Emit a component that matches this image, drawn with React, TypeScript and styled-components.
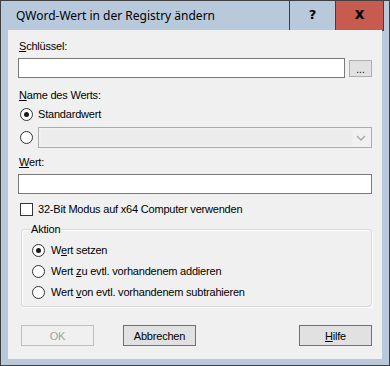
import styled, { createGlobalStyle } from "styled-components";

const Global = createGlobalStyle`
  html, body { margin: 0; padding: 0; background: #ffffff; }
  body {
    font-family: "Liberation Sans", Arial, sans-serif;
    font-size: 11px;
    letter-spacing: -0.2px;
    color: #000;
  }
  * { box-sizing: border-box; }
`;

export default function App(): JSX.Element {
  return (
    <Window>
      <Global />
      <TitleBar>
        <Title>QWord-Wert in der Registry ändern</Title>
        <CaptionButton>?</CaptionButton>
        <CaptionButton $close>x</CaptionButton>
      </TitleBar>
      <Client>
        <Label $top={10}>
          <u>S</u>chlüssel:
        </Label>
        <InputRow $top={5}>
          <TextBox />
          <DotsButton>...</DotsButton>
        </InputRow>
        <Label $top={11}>
          <u>N</u>ame des Werts:
        </Label>
        <OptionRow $top={6}>
          <Radio $checked />
          <span>Standardwert</span>
        </OptionRow>
        <OptionRow $top={6} $tall>
          <Radio />
          <Combo>
            <ComboInner />
            <ComboArrow>
              <svg width="10" height="6" viewBox="0 0 10 6">
                <path d="M1 1 L5 5 L9 1" fill="none" stroke="#a8a8a8" strokeWidth="1.4" />
              </svg>
            </ComboArrow>
          </Combo>
        </OptionRow>
        <Label $top={8}>
          <u>W</u>ert:
        </Label>
        <InputRow $top={5}>
          <TextBox />
        </InputRow>
        <OptionRow $top={9}>
          <CheckBox />
          <span>32-Bit Modus auf x64 Computer verwenden</span>
        </OptionRow>
        <Group>
          <Legend>Aktion</Legend>
          <GroupRow>
            <Radio $checked />
            <span>
              W<u>e</u>rt setzen
            </span>
          </GroupRow>
          <GroupRow>
            <Radio />
            <span>
              Wert <u>z</u>u evtl. vorhandenem addieren
            </span>
          </GroupRow>
          <GroupRow>
            <Radio />
            <span>
              Wert <u>v</u>on evtl. vorhandenem subtrahieren
            </span>
          </GroupRow>
        </Group>
        <ButtonBar>
          <PushButton disabled>OK</PushButton>
          <PushButton>Abbrechen</PushButton>
          <Spacer />
          <PushButton>
            <u>H</u>ilfe
          </PushButton>
        </ButtonBar>
      </Client>
    </Window>
  );
}

const Window = styled.div`
  width: 390px;
  height: 366px;
  border: 1px solid #3f3f3f;
  background: #b9c9dc;
  display: flex;
  flex-direction: column;
`;

const TitleBar = styled.div`
  height: 30px;
  display: flex;
  align-items: flex-start;
  padding-right: 5px;
  margin-top: -1px;
`;

const Title = styled.div`
  flex: 1;
  padding-left: 15px;
  padding-top: 1px;
  line-height: 30px;
  font-family: "Noto Sans", "Open Sans", sans-serif;
  font-size: 12px;
  letter-spacing: 0;
  color: #000;
`;

const CaptionButton = styled.div<{ $close?: boolean }>`
  width: ${(p) => (p.$close ? 48 : 47)}px;
  height: 31px;
  border: 1px solid #3f3f3f;
  border-left: ${(p) => (p.$close ? "none" : "1px solid #3f3f3f")};
  background: ${(p) => (p.$close ? "#c75b50" : "#b9c9dc")};
  display: flex;
  align-items: center;
  justify-content: center;
  font-family: "DejaVu Sans", sans-serif;
  font-weight: 900;
  font-size: ${(p) => (p.$close ? 15 : 13)}px;
  letter-spacing: 0;
  padding-bottom: ${(p) => (p.$close ? 3 : 2)}px;
`;

const Client = styled.div`
  flex: 1;
  margin: 0 7px 6px 7px;
  background: #f0f0f0;
  display: flex;
  flex-direction: column;
  padding: 0 10px 0 10px;
`;

const Label = styled.div<{ $top: number }>`
  margin-top: ${(p) => p.$top}px;
  height: 13px;
  line-height: 13px;
  padding-left: 1px;
`;

const InputRow = styled.div<{ $top: number }>`
  margin-top: ${(p) => p.$top}px;
  display: flex;
  align-items: center;
  gap: 4px;
`;

const TextBox = styled.div`
  flex: 1;
  height: 20px;
  background: #ffffff;
  border: 1px solid #7a7a7a;
`;

const DotsButton = styled.div`
  width: 23px;
  height: 17px;
  background: #e1e1e1;
  border: 1px solid #adadad;
  display: flex;
  align-items: flex-end;
  justify-content: center;
  font-size: 10px;
  line-height: 12px;
  letter-spacing: 0;
`;

const OptionRow = styled.div<{ $top: number; $tall?: boolean }>`
  margin-top: ${(p) => p.$top}px;
  height: ${(p) => (p.$tall ? 21 : 13)}px;
  display: flex;
  align-items: center;
  gap: 5px;
  padding-left: 2px;
  line-height: 13px;
`;

const Radio = styled.span<{ $checked?: boolean }>`
  flex: none;
  width: 13px;
  height: 13px;
  border-radius: 50%;
  border: 1px solid #333333;
  background: #ffffff;
  display: flex;
  align-items: center;
  justify-content: center;
  &::after {
    content: "";
    width: 5px;
    height: 5px;
    border-radius: 50%;
    background: ${(p) => (p.$checked ? "#1a1a1a" : "transparent")};
  }
`;

const CheckBox = styled.span`
  flex: none;
  width: 13px;
  height: 13px;
  border: 1px solid #333333;
  background: #ffffff;
`;

const Combo = styled.div`
  flex: 1;
  height: 21px;
  border: 1px solid #adadad;
  background: #f0f0f0;
  display: flex;
  align-items: stretch;
  padding: 2px;
`;

const ComboInner = styled.div`
  flex: 1;
  background: #ececec;
`;

const ComboArrow = styled.div`
  width: 17px;
  display: flex;
  align-items: center;
  justify-content: center;
`;

const Group = styled.fieldset`
  margin: 7px 0 0 3px;
  padding: 8px 0 0 10px;
  border: 1px solid #d8d8d8;
  border-radius: 3px;
  box-shadow: inset 1px 1px 0 #ffffff, 1px 1px 0 #ffffff;
  height: 84px;
  display: flex;
  flex-direction: column;
`;

const Legend = styled.legend`
  margin-left: -2px;
  padding: 0 1px;
  line-height: 13px;
`;

const GroupRow = styled.div`
  height: 13px;
  display: flex;
  align-items: center;
  gap: 6px;
  line-height: 13px;
  margin-bottom: 8px;
`;

const ButtonBar = styled.div`
  margin-top: 18px;
  display: flex;
  gap: 29px;
  padding-left: 3px;
`;

const Spacer = styled.div`
  flex: 1;
`;

const PushButton = styled.button`
  width: 73px;
  height: 21px;
  padding: 0;
  margin: 0;
  font-family: "Liberation Sans", Arial, sans-serif;
  font-size: 11px;
  letter-spacing: -0.2px;
  color: #000;
  background: #e1e1e1;
  border: 1px solid #707070;
  &:disabled {
    color: #a0a0a0;
    background: #f0f0f0;
    border-color: #bfbfbf;
  }
`;
